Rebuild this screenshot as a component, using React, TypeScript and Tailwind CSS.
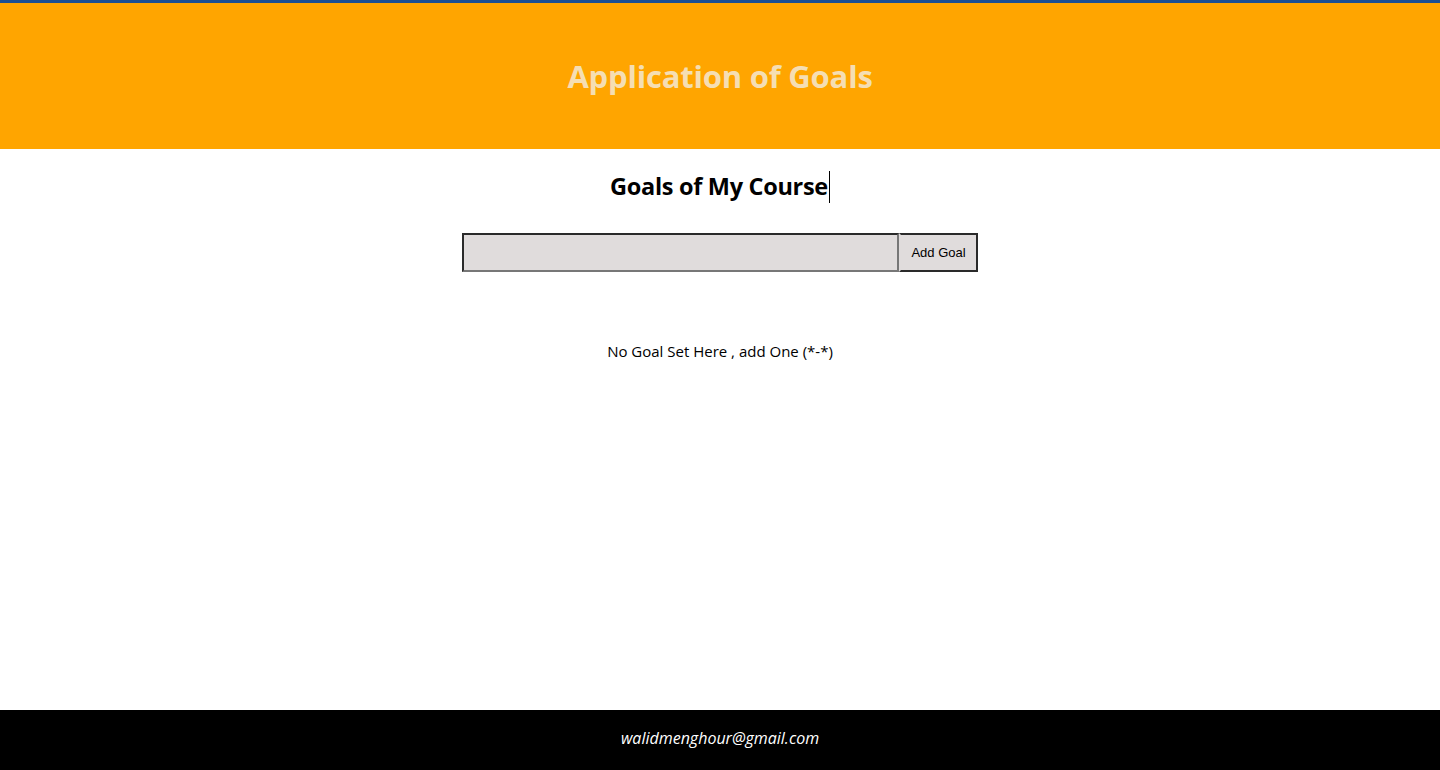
import { useState } from 'react'

export default function App() {
  const [goal, setGoal] = useState('')
  const [goals, setGoals] = useState<string[]>([])

  const addGoal = () => {
    if (goal.trim() === '') return
    setGoals((prev) => [...prev, goal.trim()])
    setGoal('')
  }

  return (
    <div className="flex flex-col h-[770px] bg-white font-['Open_Sans',sans-serif]">
      <div className="h-[3px] bg-[#1b4f93]" />
      <header className="h-[146px] bg-[#ffa500] flex items-center justify-center">
        <h1 className="text-[31px] font-bold text-[#f5deb3] tracking-[-0.2px]">Application of Goals</h1>
      </header>

      <main className="flex-1 flex flex-col items-center">
        <h2 className="mt-[22px] h-[32px] flex items-center text-[23.5px] font-bold text-black tracking-[-0.3px]">
          Goals of My Course
          <span className="ml-px w-px h-[32px] bg-black" />
        </h2>

        <div className="mt-[30px] flex">
          <input
            value={goal}
            onChange={(e) => setGoal(e.target.value)}
            className="w-[437px] h-[39px] bg-[#e0dcdc] border-2 border-[#2a2a2a] border-r-[#777] border-b-[#777] outline-none px-2"
          />
          <button
            onClick={addGoal}
            className="w-[79px] h-[39px] bg-[#e0dcdc] border-2 border-[#2a2a2a] border-l-[#e0dcdc] text-[13px] text-black font-['Liberation_Sans',sans-serif]"
          >
            Add Goal
          </button>
        </div>

        <div className="mt-[68px] text-[15px] text-black">
          {goals.length === 0 ? (
            <p>No Goal Set Here , add One (*-*)</p>
          ) : (
            <ul>
              {goals.map((g, i) => (
                <li key={i}>{g}</li>
              ))}
            </ul>
          )}
        </div>
      </main>

      <footer className="h-[60px] bg-black flex items-center justify-center pb-[5px]">
        <p className="italic text-white text-[16px]">walidmenghour@gmail.com</p>
      </footer>
    </div>
  )
}
